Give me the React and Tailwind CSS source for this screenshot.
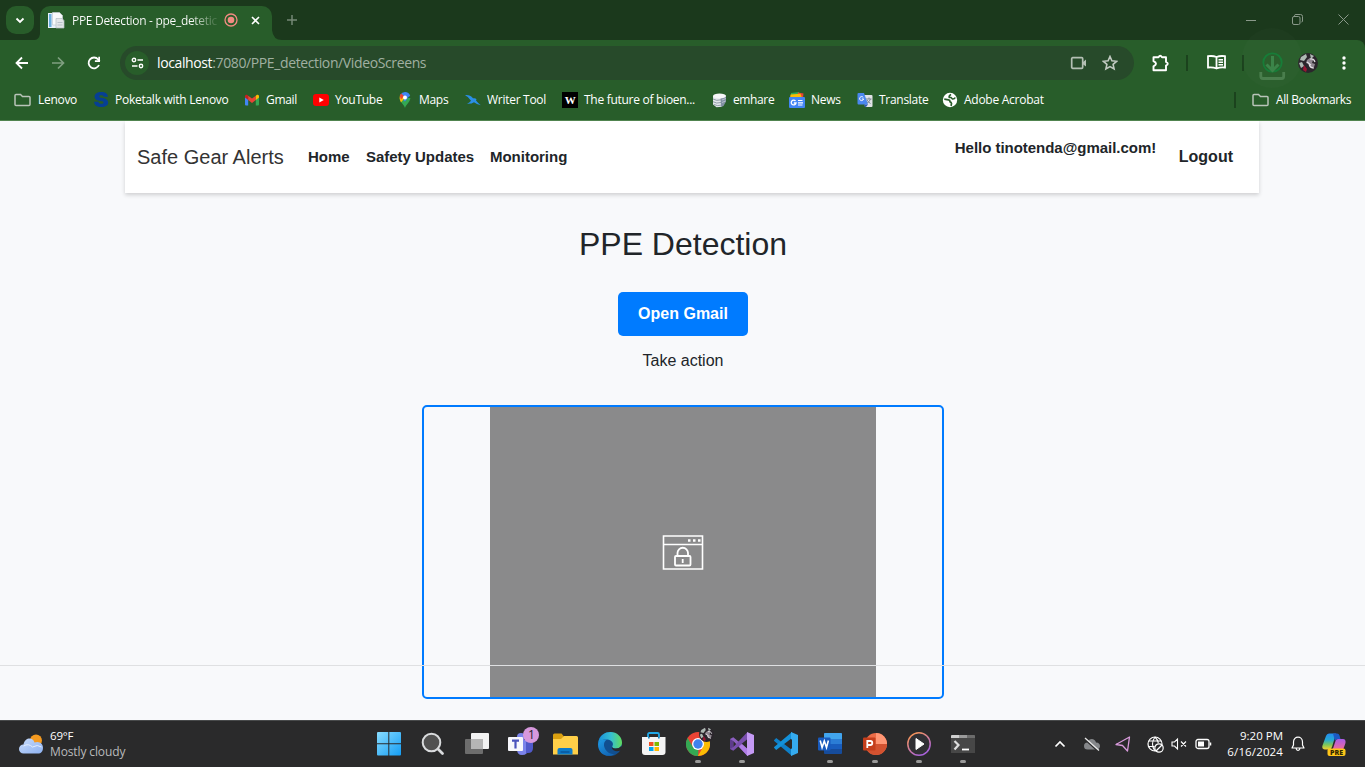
import React from "react";

const SEGOE = "font-['Open_Sans','Noto_Sans',sans-serif]";

/* ---------- small browser glyphs ---------- */
const Svg = ({ w = 16, h, vb, className = "", children }) => (
  <svg width={w} height={h || w} viewBox={vb || `0 0 ${w} ${h || w}`} fill="none" className={`block shrink-0 ${className}`}>
    {children}
  </svg>
);

const Folder = () => (
  <Svg w={18} h={14}>
    <path d="M1 2.500Q1 1.500 2 1.500H6.500L8.500 3.500H15Q16 3.500 16 4.500V11.500Q16 12.500 15 12.500H2Q1 12.500 1 11.500Z" stroke="#b9c4b9" strokeWidth="1.500" />
  </Svg>
);

const PageIcon = () => (
  <Svg w={17} h={17}>
    <rect x="0" y="1" width="9" height="15" fill="#e8f1fa" />
    <rect x="1" y="2" width="2.500" height="13" fill="#69aede" />
    <path d="M4.500 .5h7l3 3V13H4.500z" fill="#f8fafb" stroke="#c3ccd3" strokeWidth=".7" />
    <path d="M8 6.500h6l2 2V16H8z" fill="#e3e6e9" stroke="#b5bec4" strokeWidth=".7" />
    <path d="M9.500 10.500h5M9.500 13h5" stroke="#b9c2ca" />
  </Svg>
);

const Gmail = () => (
  <Svg w={14} h={12}>
    <path d="M0 2v8.500Q0 11.500 1 11.500H3.200V4z" fill="#4285f4" />
    <path d="M14 2v8.500Q14 11.500 13 11.500H10.800V4z" fill="#34a853" />
    <path d="M0 2.200Q0 .2 2 .8L3.200 1.700V6L0 3.500z" fill="#c5221f" />
    <path d="M3.200 1.700L7 4.600l3.800-2.900V6L7 9 3.200 6z" fill="#ea4335" />
    <path d="M14 2.200Q14 .2 12 .8l-1.200.9V6L14 3.500z" fill="#fbbc04" />
  </Svg>
);

const YouTube = () => (
  <Svg w={16} h={12}>
    <rect width="16" height="12" rx="3" fill="#f00" />
    <path d="M6.300 3.500v5L10.800 6z" fill="#fff" />
  </Svg>
);

const MapsPin = () => (
  <Svg w={12} h={16}>
    <path d="M6 16C5.500 13 1 10.500 .6 6L6 5.500l5.400.5C11 10.500 6.500 13 6 16z" fill="#34a853" />
    <path d="M.6 6Q.5 3.500 2 2l4 3.500L2 10.500Q.8 8.500.6 6z" fill="#fbbc04" />
    <path d="M1.300 3Q3 0 6 0q4 0 5.200 4L6 6z" fill="#4285f4" />
    <path d="M.8 4Q1.200 2.500 2.200 1.500L5 4 2 7.500z" fill="#ea4335" />
    <path d="M10.900 3.200L6 9.500 4.300 8z" fill="#4285f4" />
    <circle cx="6" cy="5.500" r="2" fill="#fff" />
  </Svg>
);

const Bird = () => (
  <Svg w={16} h={12}>
    <path d="M0 1.200Q5 .6 8 4.300Q10.500 3.800 11.500 5.200L11 6.500Q12.500 8.500 15.800 11.300Q11.500 10.200 9 8.200Q6.500 10 2 9.700Q4.500 8.500 6 6.700Q4 2.800 0 1.200z" fill="#2b8fe6" />
  </Svg>
);

const Database = () => (
  <Svg w={15} h={15}>
    <path d="M1 3v8.500l3.500 2.700 5.500-.5V3z" fill="#e2e6ea" />
    <path d="M8.500 4L14 2.500v6L11.500 13l-2.500 1z" fill="#8290a3" />
    <ellipse cx="7.500" cy="3" rx="6.500" ry="2.600" fill="#f6f7f8" />
    <path d="M1 6q3.500 2.300 8 .8M1 8.700q3.500 2.300 8 .8M1.800 11.400q3.500 2 7 .8" stroke="#7b8896" strokeWidth=".8" />
    <path d="M10 7l4-1.500M10 9.500l3.500-1.500" stroke="#c4ccd6" strokeWidth=".8" />
  </Svg>
);

const News = () => (
  <Svg w={16} h={16}>
    <path d="M2 1l8-1 1 4H2z" fill="#34a853" />
    <path d="M9 0.500l5.500 1L14 6H8z" fill="#ea4335" />
    <path d="M1.500 2.500l10-.7L13 6H1z" fill="#fbbc04" />
    <rect y="5" width="16" height="11" rx="1" fill="#4285f4" />
    <path d="M6.500 9A2.400 2.400 0 1 0 7 11H4.800" stroke="#fff" strokeWidth="1.300" />
    <path d="M9 8.500h4.500M9 10.800h5M9 13h4.500" stroke="#fff" strokeWidth="1.200" />
  </Svg>
);

const Translate = () => (
  <Svg w={16} h={16}>
    <path d="M6 3h8.500q1 0 1 1v10q0 1-1 1H8z" fill="#e1e3e6" />
    <path d="M9 7h5.500M12 5.500V7M13.500 7q-1 3-4 4.500M10 8q1 2 3.500 3.500" stroke="#7b8794" />
    <path d="M1.500 1H7l4 11.500H1.500q-1 0-1-1V2q0-1 1-1z" fill="#4a87ee" />
    <path d="M7 12.500h4L8.500 15.500z" fill="#2b58b2" />
    <path d="M6.300 5.500A2 2 0 1 0 6.600 7H4.800" stroke="#fff" />
  </Svg>
);

const Globe = () => (
  <Svg w={16} h={16}>
    <circle cx="8" cy="8" r="7.200" fill="#fff" />
    <path d="M2.300 7.200L6.500 7.800Q8 8 8 9.500q0 .8 1 .8 1 1 0 3.500" stroke="#285d2a" strokeWidth="1.800" />
    <path d="M13.200 5.500Q12.500 7.200 10.500 7L9 5.500H7.300Q6.500 4 9 2.300" stroke="#285d2a" strokeWidth="1.600" />
  </Svg>
);

const BOOKMARKS = [
  { label: "Lenovo", icon: <Folder />, pos: "w-[79px]", gap: "gap-[6px]" },
  { label: "Poketalk with Lenovo", icon: <span className="block w-[16px] scale-x-115 text-center font-['Inter',sans-serif] text-[20px] leading-[16px] font-black text-[#063f94]">S</span>, pos: "w-[152px] tracking-[-0.26px]", gap: "gap-[6px]" },
  { label: "Gmail", icon: <Gmail />, pos: "w-[68px]", gap: "gap-[7px]" },
  { label: "YouTube", icon: <YouTube />, pos: "w-[86px] tracking-[-0.28px]", gap: "gap-[6px]" },
  { label: "Maps", icon: <MapsPin />, pos: "w-[66px]", gap: "gap-[8px]" },
  { label: "Writer Tool", icon: <Bird />, pos: "w-[97px] tracking-[-0.28px]", gap: "gap-[6px]" },
  { label: "The future of bioen...", icon: <span className="block h-4 w-4 bg-black text-center font-['Liberation_Serif',serif] text-[11px] leading-4 font-bold text-white">W</span>, pos: "w-[150px] tracking-[-0.28px]", gap: "gap-[6px]" },
  { label: "emhare", icon: <Database />, pos: "w-[77px] tracking-[-0.38px]", gap: "gap-[6px]" },
  { label: "News", icon: <News />, pos: "w-[68px] tracking-[-0.3px]", gap: "gap-[6px]" },
  { label: "Translate", icon: <Translate />, pos: "w-[85px] tracking-[-0.28px]", gap: "gap-[6px]" },
  { label: "Adobe Acrobat", icon: <Globe />, pos: "w-[110px] tracking-[-0.26px]", gap: "gap-[6px]" },
];

function TabStrip() {
  return (
    <div className="flex h-10 items-start bg-[#1b391c]">
      <button className="mt-[6px] ml-[6px] flex h-7 w-7 items-center justify-center rounded-[10px] bg-[#285d2a]">
        <Svg w={10} h={7}><path d="M1.500 1.500L5 5l3.500-3.500" stroke="#fff" strokeWidth="1.800" /></Svg>
      </button>
      <Svg w={6} h={40}><path d="M6 40V34Q5 40 0 40z" fill="#285d2a" /></Svg>
      <div className="mt-[6px] flex h-[34px] w-[232px] items-center rounded-t-[10px] bg-[#285d2a] pb-[6px] pl-2">
        <PageIcon />
        <div className="mt-[2px] ml-[7px] w-[148px] overflow-hidden bg-linear-to-r from-white from-80% to-[#285d2a] bg-clip-text text-[12px] leading-4 font-medium tracking-[-0.31px] whitespace-nowrap text-transparent">PPE Detection - ppe_detetic</div>
        <Svg w={14} className="ml-[4px]"><circle cx="7" cy="7" r="6" stroke="#f28b82" strokeWidth="1.300" /><circle cx="7" cy="7" r="3.300" fill="#f28b82" /></Svg>
        <Svg w={9} className="ml-[13px]"><path d="M1 1l7 7M8 1L1 8" stroke="#fff" strokeWidth="1.600" /></Svg>
      </div>
      <Svg w={10} h={40}><path d="M0 40V30Q1 40 10 40z" fill="#285d2a" /></Svg>
      <Svg w={10} className="mt-[15px] ml-[5px]"><path d="M5 0v10M0 5h10" stroke="#768876" strokeWidth="1.500" /></Svg>
      <div className="mt-[14px] mr-[16px] ml-auto flex items-center gap-[35px]">
        <Svg w={11}><path d="M0 6.500h10" stroke="#8a998a" /></Svg>
        <Svg w={11}><path d="M2.500 2V1.500Q2.500.5 4 .5h4.500q2 0 2 2V7q0 1-1 1" stroke="#8a998a" /><rect x=".5" y="2.500" width="7.500" height="8" rx="1.500" stroke="#8a998a" /></Svg>
        <Svg w={11}><path d="M.5.5l10 10M10.500.5l-10 10" stroke="#8a998a" /></Svg>
      </div>
    </div>
  );
}

function Avatar({ size = 20 }) {
  return (
    <Svg w={size} vb="0 0 20 20">
      <circle cx="10" cy="10" r="10" fill="#2b262c" />
      <path d="M3 4l5-3 1 3-3 4-4-1zM1 10l3-1 2 4-3 2zM12 1l4 2-3 3z" fill="#aeb9b3" />
      <path d="M9 7l3-2 3 2-1 3 3 1-1 3-4 1-1-4-3-1z" fill="#8f8790" />
      <path d="M12 6q4-1 5 3M11 11q1 4 5 4M9 9l4 3" stroke="#e3dfe4" strokeWidth="1.200" />
      <path d="M6 12l3 4-1 3-3-2z" fill="#9b1733" />
    </Svg>
  );
}

function Toolbar() {
  return (
    <div className="bg-[#1b391c]">
      <div className="flex h-[45px] items-center rounded-tr-[8px] bg-[#285d2a]">
        <Svg w={14} className="ml-[15px]"><path d="M13 7H2M7 1.500L1.500 7 7 12.500" stroke="#fff" strokeWidth="1.800" /></Svg>
        <Svg w={14} className="ml-[22px]"><path d="M1 7h11M7 1.500L12.500 7 7 12.500" stroke="#7f9f80" strokeWidth="1.700" /></Svg>
        <Svg w={14} className="ml-[22px]"><path d="M12 9A5.400 5.400 0 1 1 11.200 3.500L12.700 5" stroke="#fff" strokeWidth="1.800" /><path d="M13 .7V6H7.900V4.300h3.400V.7z" fill="#fff" /></Svg>
        <div className="ml-[19px] flex h-[34px] w-[1014px] items-center rounded-full bg-[#274a2a] pl-[5px]">
          <div className="flex h-6 w-6 items-center justify-center rounded-full bg-[#285d2a]">
            <Svg w={13} h={12}>
              <circle cx="3" cy="3" r="1.700" stroke="#fff" strokeWidth="1.400" /><path d="M6.500 3H12M1 9h5.500" stroke="#fff" strokeWidth="1.600" /><circle cx="10" cy="9" r="1.700" stroke="#fff" strokeWidth="1.400" />
            </Svg>
          </div>
          <div className="ml-2 text-[14px] leading-5 tracking-[-0.38px] text-[#a0b0a1]"><span className="text-white">localhost</span>:7080/PPE_detection/VideoScreens</div>
          <Svg w={17} h={14} className="mr-[15px] ml-auto"><rect x="1.700" y="1.700" width="11" height="10.600" rx="1" stroke="#b4bfb4" strokeWidth="1.700" /><path d="M12.500 6.500L16 3.500v7L12.500 8z" fill="#b4bfb4" /></Svg>
          <Svg w={16} className="mr-[16px]"><path d="M8 1.500l1.900 4.300 4.700.5-3.500 3.100 1 4.600L8 11.600 3.900 14l1-4.600L1.400 6.300l4.700-.5z" stroke="#c1cac1" strokeWidth="1.600" /></Svg>
        </div>
        <Svg w={18} h={18} className="ml-[18px]"><path d="M1.500 3.200H6.500Q8.200.2 10 3.200H14V8q3.500 1.500 0 3.500V16.200H1.500V12.300Q6.500 9.700 1.500 7.200z" stroke="#fff" strokeWidth="1.900" strokeLinejoin="round" /></Svg>
        <div className="ml-[16px] h-4 w-[2px] bg-[#1b421d]" />
        <Svg w={19} h={15} className="ml-[19px]"><path d="M9.500 2Q6 .5 1 1.200V12.500Q6 12 9.500 13.500Q13 12 18 12.500V1.200Q13 .5 9.500 2zM9.500 2v11" stroke="#fff" strokeWidth="1.800" /><path d="M11.500 4.800h4.500M11.500 7.300h4.500M11.500 9.800h4.500" stroke="#fff" strokeWidth="1.400" /></Svg>
        <div className="ml-[16px] h-4 w-[2px] bg-[#1b421d]" />
        <div className="relative ml-[14px]">
          <div className="absolute -top-[16px] -left-[16px] h-[60px] w-[60px] rounded-full bg-white/[0.015]" />
          <Svg w={28} h={30} className="mt-[8px]">
            <circle cx="14.500" cy="10.500" r="9.200" stroke="#147b35" strokeWidth="1.800" />
            <path d="M14.500 4v14M8.500 12.500l6 6 6-6" stroke="#388347" strokeWidth="3" />
            <path d="M2.800 20v4q0 2.500 2 2.500h18.900q2 0 2-2.500V20" stroke="#487c4b" strokeWidth="2.800" />
          </Svg>
        </div>
        <div className="ml-[12px]"><Avatar /></div>
        <Svg w={4} h={14} className="ml-[24px]"><circle cx="2" cy="2" r="1.700" fill="#fff" /><circle cx="2" cy="7" r="1.700" fill="#fff" /><circle cx="2" cy="12" r="1.700" fill="#fff" /></Svg>
      </div>
    </div>
  );
}

function BookmarkBar() {
  return (
    <div className="flex h-9 items-start border-b border-[#50844f] bg-[#285d2a] pl-[14px] text-[12px] leading-[18px] font-medium tracking-[-0.3px] text-white">
      <div className="mt-[6px] flex h-[18px]">
        {BOOKMARKS.map((b) => (
          <div key={b.label} className={`flex shrink-0 items-center whitespace-nowrap ${b.pos} ${b.gap}`}>
            {b.icon}<span>{b.label}</span>
          </div>
        ))}
      </div>
      <div className="mt-[6px] mr-[13px] ml-auto flex h-[18px] items-center">
        <div className="mr-[16px] h-4 w-[2px] bg-[#1b421d]" />
        <Folder />
        <span className="ml-[6px] w-[76px] tracking-[-0.38px] whitespace-nowrap">All Bookmarks</span>
      </div>
    </div>
  );
}

/* ---------- web page ---------- */
function WebPage() {
  return (
    <main className="relative h-[599px] overflow-hidden bg-[#f8f9fb] font-['Liberation_Sans',Arial,sans-serif] text-[#212529]">
      <header className="ml-[125px] flex h-[72px] w-[1134px] items-center bg-white px-3 text-[#212529] shadow-[0_2px_4px_rgba(0,0,0,0.17)]">
        <a className="w-[171px] text-[20px] leading-[30px] text-[#333]">Safe Gear Alerts</a>
        <nav className="flex text-[15px] leading-6 font-bold tracking-[-0.02px]">
          <a className="w-[58px]">Home</a>
          <a className="w-[124px]">Safety Updates</a>
          <a>Monitoring</a>
        </nav>
        <div className="mr-[14px] ml-auto flex">
          <span className="-mt-[9px] mb-[9px] w-[224px] text-[15px] leading-6 font-bold tracking-[-0.03px] whitespace-nowrap">Hello tinotenda@gmail.com!</span>
          <a className="text-[16px] leading-6 font-bold">Logout</a>
        </div>
      </header>
      <section className="flex flex-col items-center">
        <h1 className="mt-[31px] pl-px text-[32px] leading-10">PPE Detection</h1>
        <button className="mt-[28px] h-11 w-[130px] rounded-[5px] bg-[#007bff] pl-px text-[16px] font-bold text-white">Open Gmail</button>
        <p className="mt-[13px] pl-px text-[16px] leading-6">Take action</p>
        <div className="mt-[32px] flex h-[294px] w-[522px] justify-center rounded-[5px] border-2 border-[#007bff]">
          <div className="flex h-full w-[386px] items-center justify-center bg-[#8a8a8b]">
            <Svg w={42} h={35}>
              <path d="M1.500 1h39v33h-39zM1.500 9.500h39" stroke="#fff" strokeWidth="1.600" />
              <path d="M26 5.500h2.500M31 5.500h2.500M36 5.500h2.500" stroke="#fff" strokeWidth="2.500" />
              <rect x="13" y="21" width="15.500" height="9.500" rx="1" stroke="#fff" strokeWidth="1.800" />
              <path d="M15.500 20.500v-2.500a5.200 5.200 0 0 1 10.500 0v2.500M20.700 24v4" stroke="#fff" strokeWidth="1.800" />
            </Svg>
          </div>
        </div>
      </section>
      <div className="absolute top-[544px] left-0 h-px w-full bg-[#dfe0e2]" />
    </main>
  );
}

/* ---------- taskbar ---------- */
const Start = () => (
  <Svg w={24} h={24}>
    <defs><linearGradient id="win" x2="1" y2="1"><stop stopColor="#88dcff" /><stop offset="1" stopColor="#149df4" /></linearGradient></defs>
    <path d="M0 1Q0 0 1 0H11.300V11.300H0zM12.300 0H23q1 0 1 1V11.300H12.300zM0 12.300H11.300V23.500H1q-1 0-1-1zM12.300 12.300H24V22.500q0 1-1 1H12.300z" fill="url(#win)" />
  </Svg>
);
const Search = () => (
  <Svg w={24}><circle cx="10.500" cy="10.500" r="8.800" fill="#515151" stroke="#d9dbdd" strokeWidth="2" /><path d="M17 17L21.500 21.500" stroke="#d9dbdd" strokeWidth="2.800" strokeLinecap="round" /></Svg>
);
const Tasks = () => (
  <Svg w={24}><rect x="6" y="1" width="18" height="16" rx="1" fill="#f2f2f2" /><rect y="7" width="18" height="15" rx="1" fill="#6d6d6d" /><path d="M6 7h12v10H6z" fill="#b5b5b5" /></Svg>
);
const Teams = () => (
  <div className="relative">
    <Svg w={26} h={24}>
      <circle cx="13" cy="5" r="4" fill="#7b83eb" />
      <path d="M9 8h11v9q0 6-6 6-5 0-5-6z" fill="#7b83eb" /><path d="M18 10h7v6q0 5-5 5h-2z" fill="#5059c9" />
      <rect y="5" width="15" height="14" rx="1" fill="#f7f7fc" /><path d="M4 8.700h7M7.500 8.500v8" stroke="#4b53bc" strokeWidth="2.200" />
    </Svg>
    <span className="absolute -top-[5px] left-[15px] h-4 w-4 rounded-full bg-[#d798dd] text-center text-[12px] leading-4 text-[#262026]">1</span>
  </div>
);
const Explorer = () => (
  <Svg w={25} h={24}>
    <path d="M0 3Q0 1.500 1.500 1.500H8.500L11 4.500V9H0z" fill="#dba010" /><path d="M0 7h8l3-3h12.500q1.500 0 1.500 1.500V22.500H0z" fill="#ffcf48" /><path d="M4.500 22.500V18q0-2 2-2h11q2 0 2 2v4.500z" fill="#0d7bc9" /><path d="M7.500 20h9" stroke="#0a569b" strokeWidth="1.500" />
  </Svg>
);
const Edge = () => (
  <Svg w={24}>
    <defs>
      <linearGradient id="edgeTop" x1="0" x2="1"><stop stopColor="#188fd9" /><stop offset=".55" stopColor="#36bfd0" /><stop offset="1" stopColor="#61db5c" /></linearGradient>
      <linearGradient id="edgeLow" x2=".6" y2="1"><stop stopColor="#1f9be4" /><stop offset="1" stopColor="#1267b7" /></linearGradient>
    </defs>
    <circle cx="12" cy="12" r="12" fill="#114f90" />
    <path d="M0 12C1 3 7 0 12.500 0 19 0 24 5 24 10.500c0 4-3 6-6.500 6-2.500 0-4-1-3.200-2.200C16.500 11 13 7.800 9.500 7.500 4.500 7 1 9 0 12z" fill="url(#edgeTop)" />
    <path d="M0 12c1-4 5-5 9-4.500-2.500 1.300-3.500 4-2.800 7 1 4.500 5 7.500 10 7.800C10 26 0 23 0 12z" fill="url(#edgeLow)" />
    <path d="M14.300 14.300q-.8 1.800 2.700 2.300 4 .2 6.500-2.500l.5 2-1.500 2.500q-4 1.500-7-.3-2.500-1.800-1.200-4z" fill="#2a2a2b" />
  </Svg>
);
const Store = () => (
  <Svg w={24}>
    <path d="M6 7V2.500Q6 1 7.500 1h8Q17 1 17 2.500V7" stroke="#20a8e8" strokeWidth="1.800" />
    <path d="M0 5h23.500v15q0 3-3 3H3q-3 0-3-3z" fill="#f4f4f4" />
    <path d="M6 5h1.700v1.500H6zM16 5h1.700v1.500H16z" fill="#1687c2" />
    <path d="M7 10h4.500v4H7z" fill="#f25022" /><path d="M12.500 10H17v4h-4.500z" fill="#7fba00" /><path d="M7 15h4.500v4H7z" fill="#00a4ef" /><path d="M12.500 15H17v4h-4.500z" fill="#ffb900" />
  </Svg>
);
const Chrome = () => (
  <div className="relative">
    <Svg w={24}>
      <circle cx="12" cy="12" r="12" fill="#ea4335" />
      <path d="M1.600 6L7 15l5.500 2L12 24A12 12 0 0 1 1.600 6z" fill="#34a853" />
      <path d="M12 24l5-9 .5-8h5.500A12 12 0 0 1 12 24z" fill="#fbbc04" />
      <circle cx="12" cy="12" r="6" fill="#fff" /><circle cx="12" cy="12" r="4.700" fill="#3f82ee" />
    </Svg>
    <div className="absolute -top-[5px] left-[13px]"><Avatar size={15} /></div>
  </div>
);
const VisualStudio = () => (
  <Svg w={24}>
    <path d="M0 7l3.300-1.800L17.500 17v7L3.300 9v6L0 17z" fill="#8c5fc0" />
    <path d="M0 7l3.300 2v6L0 17z" fill="#5d3b8c" />
    <path d="M0 17l3.300 1.800L17.500 7V0L3.300 15z" fill="#7a4fae" />
    <path d="M17.500 17v7L9 14.700 12 12z" fill="#b07de6" />
    <path d="M17 0l7 3v18l-7 3z" fill="#c59af5" />
  </Svg>
);
const Code = () => (
  <Svg w={24}>
    <path d="M0 8.200L2.200 6 18 18v6L.2 9z" fill="#0e7fc8" /><path d="M0 15.800L2.200 18 18 6V0L.2 15z" fill="#1391d9" /><path d="M17 0l7 3v18l-7 3z" fill="#35abef" /><path d="M18 7v10l-6.500-5z" fill="#2b2b2b" />
  </Svg>
);
const Word = () => (
  <Svg w={24}>
    <rect x="6" y="1" width="18" height="21" rx="1" fill="#164c9c" /><path d="M6 2q0-1 1-1h16q1 0 1 1v5H6z" fill="#42a5ee" /><path d="M6 7h18v5H6z" fill="#2b7dd5" /><path d="M6 12h18v5H6z" fill="#195dbd" />
    <rect y="5.500" width="12.500" height="13" rx="1" fill="#185abd" /><path d="M2.200 8.500l1.900 7 2.200-6.500 2.200 6.500 1.900-7" stroke="#fff" strokeWidth="1.600" />
  </Svg>
);
const PowerPoint = () => (
  <Svg w={24}>
    <circle cx="13" cy="12" r="11" fill="#ed6c47" /><path d="M13 1a11 11 0 0 1 11 11H13z" fill="#ff9674" /><path d="M2 12h22a11 11 0 0 1-22 0z" fill="#d35230" /><rect y="5.500" width="12.500" height="13" rx="1" fill="#c43e1c" /><path d="M4.300 16V9h3q2 0 2 2t-2 2h-3" stroke="#fff" strokeWidth="1.800" />
  </Svg>
);
const Media = () => (
  <Svg w={24}>
    <defs><linearGradient id="mp" x2=".6" y2="1"><stop stopColor="#ff9b45" /><stop offset="1" stopColor="#a862db" /></linearGradient></defs>
    <circle cx="12" cy="12" r="11.200" fill="#303034" stroke="url(#mp)" strokeWidth="1.500" /><path d="M9 6.500l8 5.500-8 5.500z" fill="#fff" stroke="#fff" strokeLinejoin="round" />
  </Svg>
);
const Terminal = () => (
  <Svg w={24}><path d="M0 4q0-1 1-1h22q1 0 1 1v17H0z" fill="#474747" /><path d="M0 6V4q0-1 1-1h7v3z" fill="#d0d0d0" /><path d="M8 3h8v3H8z" fill="#9b9b9b" /><path d="M16 3h7q1 0 1 1v2h-8z" fill="#6c6c6c" /><path d="M3.500 9l4 4-4 4.500" stroke="#ddd" strokeWidth="2.200" /><path d="M11 17.500h7" stroke="#fff" strokeWidth="1.800" /></Svg>
);

const APPS = [
  [Start, false], [Search, false], [Tasks, false], [Teams, false], [Explorer, false], [Edge, false], [Store, false],
  [Chrome, true], [VisualStudio, true], [Code, false], [Word, true], [PowerPoint, true], [Media, true], [Terminal, true],
];

function Taskbar() {
  return (
    <footer className="flex h-[47px] items-start border-t border-[#484a4b] bg-[#2a2a2b] text-[11.5px] leading-4 text-white">
      <Svg w={25} h={20} className="mt-[13px] ml-[19px]">
        <defs><linearGradient id="cloud" y2="1"><stop stopColor="#c8dcfb" /><stop offset="1" stopColor="#8eb2f2" /></linearGradient></defs>
        <circle cx="17" cy="6.500" r="6" fill="#f49a20" /><path d="M4.500 19.500a4.500 4.500 0 0 1 0-9C6 3 14 3 15.500 8.500c5-2 8.500 1.500 8.500 5 0 4-2 6-5 6z" fill="url(#cloud)" /><path d="M4.500 12q5-3 9 1 5-3 9 0" stroke="#e3eeff" />
      </Svg>
      <div className="mt-[7px] ml-[6px] w-[327px]">
        <div className="font-medium tracking-[-0.2px]">69°F</div>
        <div className="text-[12px] font-medium tracking-[-0.12px] text-[#b9babc]">Mostly cloudy</div>
      </div>
      <div className="flex">
        {APPS.map(([Icon, running], i) => (
          <div key={i} className="flex w-[44.15px] flex-col items-start pt-[11px]">
            <div className="flex w-6 flex-col items-center"><Icon />{running && <div className="mt-1 h-[3px] w-[6px] rounded-full bg-[#999]" />}</div>
          </div>
        ))}
      </div>
      <div className="mr-[19px] ml-auto flex">
        <Svg w={12} h={8} className="mt-[19px]"><path d="M1.500 6.500L6 2l4.500 4.500" stroke="#fff" strokeWidth="1.700" /></Svg>
        <Svg w={18} h={15} className="mt-[16px] ml-[17px]"><path d="M4.500 12.500a3.500 3.500 0 0 1 0-7C6 .5 12 1 13 5.500c3 0 4 2 4 3.500s-1 3.500-3 3.500z" fill="#85878a" /><path d="M1 1.500l13 12" stroke="#2a2a2b" strokeWidth="1.500" /><path d="M2 1l14 12.500" stroke="#e8e8e8" strokeWidth="1.300" /></Svg>
        <Svg w={16} h={16} className="mt-[15px] ml-[14px]"><path d="M1 8.500L14.500 1l-2 14L7.500 9.500z" stroke="#d99bdc" strokeWidth="1.300" strokeLinejoin="round" /></Svg>
        <Svg w={17} h={17} className="mt-[15px] ml-[16px]"><circle cx="8" cy="8" r="7" stroke="#fff" strokeWidth="1.200" /><path d="M8 1q-5 7 0 14M8 1q3 3 3.300 6M1.800 5h12.400M1.500 10.500h6" stroke="#fff" strokeWidth="1.100" /><circle cx="12" cy="12" r="4.200" fill="#2a2a2b" stroke="#fff" strokeWidth="1.200" /><path d="M9 15l6-6" stroke="#fff" strokeWidth="1.200" /></Svg>
        <Svg w={17} h={14} className="mt-[16px] ml-[7px]"><path d="M1 5h2.500L6.500 2v10L3.500 9H1zM10 4.500l5 5M15 4.500l-5 5" stroke="#fff" strokeWidth="1.100" /></Svg>
        <Svg w={17} h={12} className="mt-[17px] ml-[7px]"><rect x="1" y="1.500" width="13" height="9" rx="2" stroke="#fff" strokeWidth="1.300" /><path d="M3 3.500h6v5H3z" fill="#fff" /><path d="M15.500 4.500v3" stroke="#fff" strokeWidth="1.500" /></Svg>
        <div className="mt-[7px] ml-[14px] w-[57px] text-right whitespace-nowrap"><div>9:20 PM</div><div className="tracking-[0.13px]">6/16/2024</div></div>
        <Svg w={14} h={16} className="mt-[15px] ml-[8px]"><path d="M1 12l1.500-3V6C2.500-.5 11.500-.5 11.500 6v3l1.500 3zM5 12.500q2 4 4 0" stroke="#fff" strokeWidth="1.200" strokeLinejoin="round" /></Svg>
        <div className="mt-[12px] ml-[17px]">
          <Svg w={24} h={24}>
            <defs>
              <linearGradient id="coA" x1="0" x2="0" y1="0" y2="1"><stop stopColor="#258cf0" /><stop offset=".4" stopColor="#25a9d4" /><stop offset=".7" stopColor="#7bc65a" /><stop offset="1" stopColor="#f1d02f" /></linearGradient>
              <linearGradient id="coB" x1="0" x2="0" y1="0" y2="1"><stop stopColor="#a95ce8" /><stop offset="1" stopColor="#f36b94" /></linearGradient>
            </defs>
            <path d="M7 .5h7L10 14q-.8 2.500-3 2.500H3q-3.500 0-2.500-4L4 3q.8-2.500 3-2.500z" fill="url(#coA)" />
            <path d="M11 .5h4q2 0 2.500 2L18.500 6H16q-2 0-3 2z" fill="#1c59c4" />
            <path d="M16 6h5q3 0 2.500 4L21 17H10.500l3-9q.7-2 2.500-2z" fill="url(#coB)" />
            <rect x="5.500" y="15.500" width="18" height="7.500" rx="2" fill="#ffc61a" />
            <text x="14.500" y="21.800" textAnchor="middle" fontFamily="Open Sans, sans-serif" fontSize="7" fontWeight="800" fill="#342800">PRE</text>
          </Svg>
        </div>
      </div>
    </footer>
  );
}

export default function App() {
  return (
    <div className={`h-[767px] w-[1365px] overflow-hidden ${SEGOE}`}>
      <TabStrip />
      <Toolbar />
      <BookmarkBar />
      <WebPage />
      <Taskbar />
    </div>
  );
}
